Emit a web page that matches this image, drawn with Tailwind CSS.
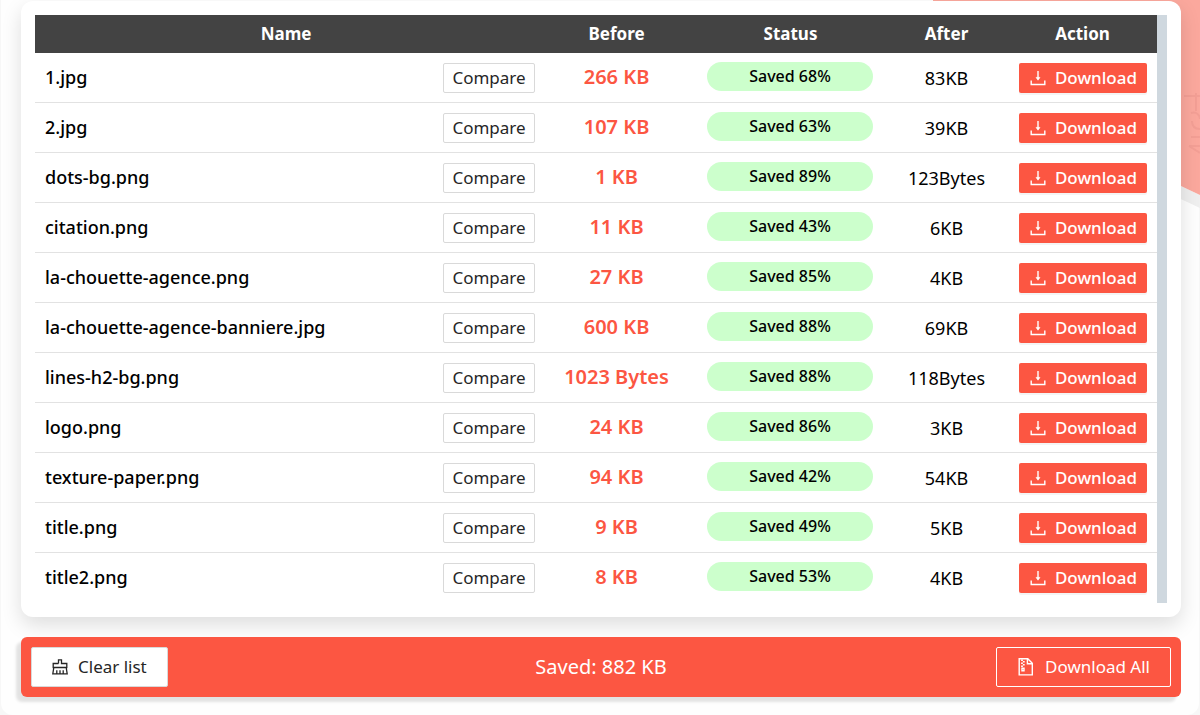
<!DOCTYPE html>
<html lang="en">
<head>
<meta charset="utf-8">
<meta name="viewport" content="width=device-width, initial-scale=1">
<title>Compressed images</title>
<script src="https://cdn.jsdelivr.net/npm/@tailwindcss/browser@4"></script>
</head>
<body class="overflow-x-hidden bg-[#f7f7f7] font-['Noto_Sans',sans-serif] text-black">
<main class="relative mx-px rounded-b-xl bg-[#fefefe] pt-px pr-[18px] pb-[18px] pl-5">
  <svg class="absolute top-0 -right-px h-[215px] w-[300px]" viewBox="0 0 300 215" aria-hidden="true">
    <path d="M270 181 300 195V208L270 194Z" fill="#efefef"/>
    <path d="M33 0H300V195L33 69Z" fill="#fba89d"/>
    <g fill="none" stroke="#f39f95" stroke-width="2">
      <path d="M284 96h16M296 93v18M291 113c6-2 9 3 9 6M292 121c0 6 4 8 8 8M291 137h9M289 146h11M289 146l11 7"/>
    </g>
  </svg>
  <section class="relative rounded-xl bg-white p-3.5 shadow-[0_8px_20px_rgba(0,0,0,0.13)]">
    <div class="border-r-[10px] border-[#cfd8df]">
      <table class="w-full table-fixed border-separate border-spacing-0">
        <colgroup><col class="w-[398px]"><col class="w-[112px]"><col class="w-[143px]"><col class="w-[205px]"><col class="w-[107px]"><col class="w-[157px]"></colgroup>
        <thead class="bg-[#434343] text-[17px] text-white">
          <tr class="h-[38px]"><th colspan="2" class="pr-2">Name</th><th>Before</th><th>Status</th><th>After</th><th class="pl-2">Action</th></tr>
        </thead>
        <tbody id="rows"></tbody>
      </table>
    </div>
  </section>
  <footer class="relative mt-5 flex h-[60px] items-center justify-between rounded-md bg-[#fc5642] px-2.5 text-white shadow-[-5px_5px_3px_rgba(0,0,0,0.11)]">
    <div class="flex flex-1 justify-start">
      <button class="flex h-10 items-center gap-2.5 rounded-xs border border-[#d9d9d9] bg-white px-5 text-[17px] text-[#262626]">
        <svg class="size-4" viewBox="0 0 16 16" fill="none" stroke="currentColor" stroke-width="1.3" aria-hidden="true"><path d="M6.5 4.5V.8h3v3.7h5.3v4H1.2v-4h5.3M1.8 8.5.8 14.9h14.4l-1-6.4M4.8 14.5v-3.2M8 14.5v-3.2M11.2 14.5v-3.2"/></svg>
        Clear list
      </button>
    </div>
    <p class="text-xl">Saved: 882 KB</p>
    <div class="flex flex-1 justify-end">
      <button class="flex h-10 items-center gap-2.5 rounded-xs border border-white px-5 text-[17px]">
        <svg class="size-[18px]" viewBox="0 0 18 18" fill="none" stroke="currentColor" stroke-width="1.4" aria-hidden="true"><path d="M2.2.8h8.6l4.5 4.5v11.6H2.2zM10.4 1v4.7h4.7"/><path d="M5 1.5V3M6.8 3v1.5M5 4.5V6M6.8 6v1.5M5 7.5V9" stroke-width="1.8"/><path d="M5 10.2h2v2.6H5z"/></svg>
        Download All
      </button>
    </div>
  </footer>
</main>
<template id="row">
  <tr class="h-[50px] *:border-b *:border-[#e2e2e2] last:*:border-transparent">
    <td class="px-2.5 pb-0.5 text-lg font-medium whitespace-nowrap" data-f="name"></td>
    <td class="px-2.5 pt-px"><button class="block h-[30px] w-full rounded-xs border border-[#d9d9d9] bg-white text-[17px] text-[#262626]">Compare</button></td>
    <td class="pb-0.5 text-center text-xl font-semibold whitespace-nowrap text-[#fc5642]" data-f="before"></td>
    <td class="pr-5 pb-0.5 pl-[19px]"><div class="h-[29px] rounded-full bg-[#cfc] text-center text-base leading-[29px] font-medium" data-f="status"></div></td>
    <td class="text-center text-lg" data-f="after"></td>
    <td class="pt-px pr-2.5 pl-[19px]"><button class="flex h-[30px] w-full items-center justify-between rounded-xs bg-[#fc5642] px-2.5 text-[17px] font-medium text-white shadow-[0_2px_0_rgba(0,0,0,0.045)]">
      <svg class="size-[18px]" viewBox="0 0 18 18" fill="none" stroke="currentColor" stroke-width="1.4" aria-hidden="true"><path d="M2.2 11.5v4h13.6v-4M9 2v7.5"/><path d="M7 8.4h4L9 11.2z" fill="currentColor" stroke-width=".6"/></svg>
      Download</button></td>
  </tr>
</template>
<script>
const files = [
  ["1.jpg","266 KB","68%","83KB"],["2.jpg","107 KB","63%","39KB"],["dots-bg.png","1 KB","89%","123Bytes"],
  ["citation.png","11 KB","43%","6KB"],["la-chouette-agence.png","27 KB","85%","4KB"],
  ["la-chouette-agence-banniere.jpg","600 KB","88%","69KB"],["lines-h2-bg.png","1023 Bytes","88%","118Bytes"],
  ["logo.png","24 KB","86%","3KB"],["texture-paper.png","94 KB","42%","54KB"],["title.png","9 KB","49%","5KB"],["title2.png","8 KB","53%","4KB"]
];
const tpl = document.getElementById("row");
for (const [name, before, pct, after] of files) {
  const r = tpl.content.cloneNode(true);
  const v = { name, before, status: "Saved " + pct, after };
  r.querySelectorAll("[data-f]").forEach(e => { e.textContent = v[e.dataset.f]; });
  document.getElementById("rows").append(r);
}
</script>
</body>
</html>
